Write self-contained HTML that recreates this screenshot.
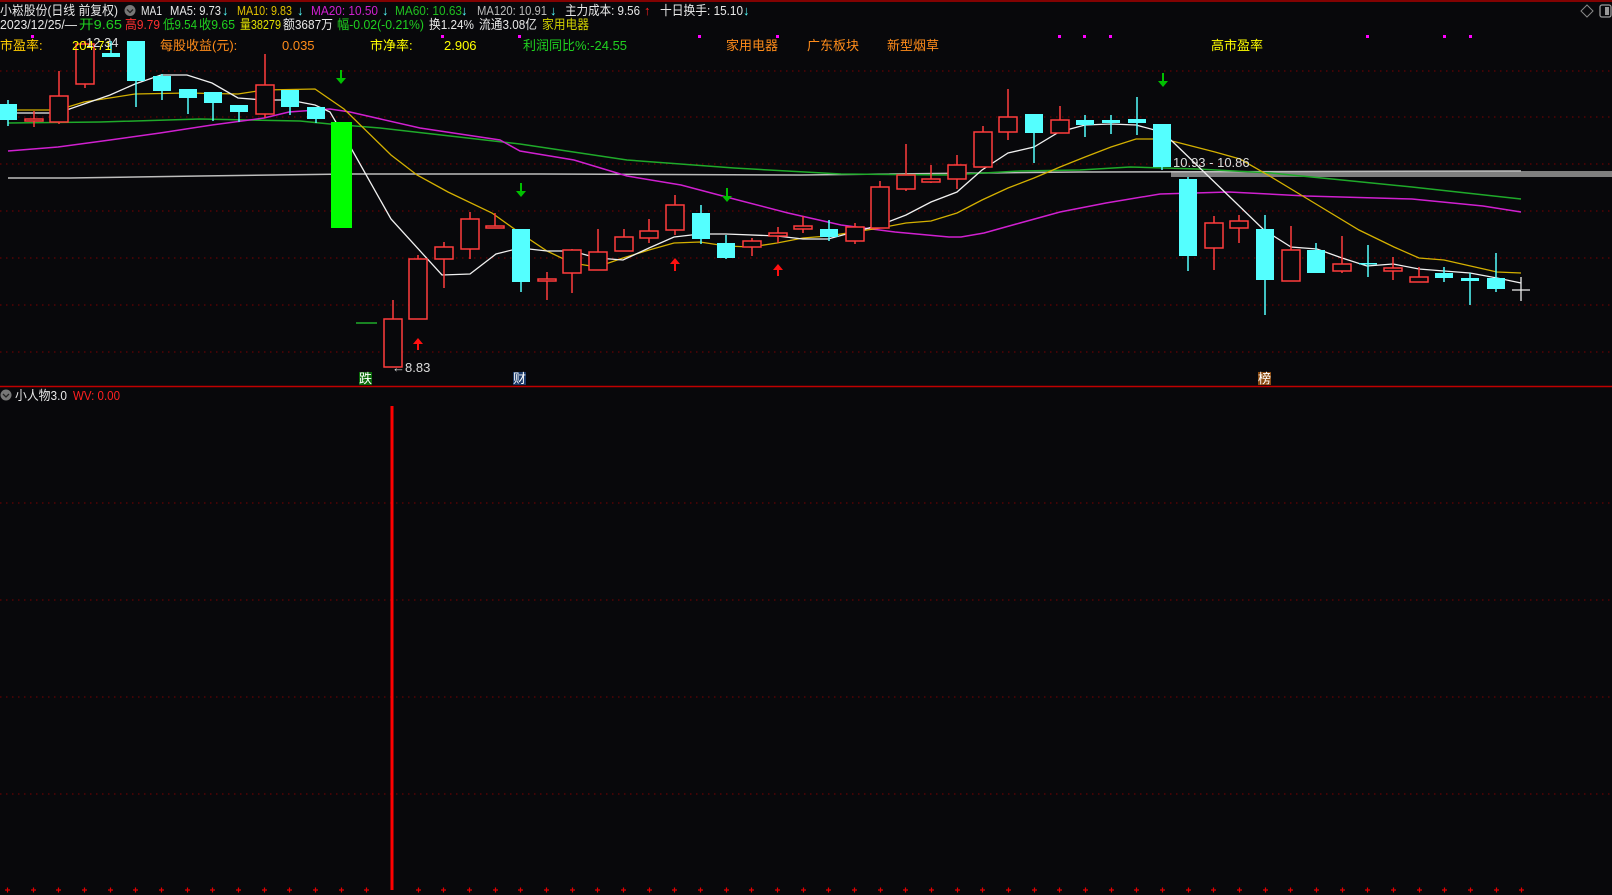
<!DOCTYPE html>
<html><head><meta charset="utf-8"><style>
html,body{margin:0;padding:0;background:#08080b;width:1612px;height:895px;overflow:hidden}
svg{position:absolute;left:0;top:0}
text{font-family:"Liberation Sans","Noto Sans CJK SC",sans-serif;font-size:13px}
.r{fill:#08080b;stroke:#ff3c3c;stroke-width:1.5}
.rw{stroke:#ff3c3c;stroke-width:1.5}
.c{fill:#54ffff}
.cw{stroke:#54ffff;stroke-width:1.5}
.g{stroke:#7a0000;stroke-width:1;stroke-dasharray:1.5 4.5}
</style></head><body>
<svg width="1612" height="895" viewBox="0 0 1612 895">
<line x1="0" y1="1" x2="1612" y2="1" stroke="#a00" stroke-width="1.5"/>
<g class="g">
<line x1="0" y1="71" x2="1612" y2="71"/><line x1="0" y1="117" x2="1612" y2="117"/>
<line x1="0" y1="164" x2="1612" y2="164"/><line x1="0" y1="211" x2="1612" y2="211"/>
<line x1="0" y1="258" x2="1612" y2="258"/><line x1="0" y1="305" x2="1612" y2="305"/>
<line x1="0" y1="352" x2="1612" y2="352"/>
<line x1="0" y1="503" x2="1612" y2="503"/><line x1="0" y1="600" x2="1612" y2="600"/>
<line x1="0" y1="697" x2="1612" y2="697"/><line x1="0" y1="794" x2="1612" y2="794"/>
</g>
<line x1="0" y1="386.5" x2="1612" y2="386.5" stroke="#c00000" stroke-width="1.5"/>

<rect x="1171" y="171" width="441" height="6" fill="#7f7f7f"/>

<polyline fill="none" stroke="#bdbdbd" stroke-width="1.5" points="8,178 70,178 200,176 350,174 540,174 800,175 1080,172 1521,171"/>
<polyline fill="none" stroke="#1faa2a" stroke-width="1.5" points="8,123 100,122 200,119 300,121 330,124 380,128 450,136 520,144 627,160 734,168 841,174 949,175 1020,171 1080,170 1130,167 1197,169 1271,173 1342,180 1412,187 1521,199"/>
<polyline fill="none" stroke="#d020d0" stroke-width="1.5" points="8,151 58,147 110,140 160,133 212,125 264,118 289,112 330,109 350,112 420,128 500,140 520,151 574,160 627,176 681,185 734,199 788,213 841,225 895,232 949,237 961,237 984,233 1020,223 1060,212 1106,203 1160,194 1229,192 1306,196 1412,199 1483,206 1521,212"/>
<polyline fill="none" stroke="#d4b000" stroke-width="1.3" points="8,110 58,110 84,102 135,94 187,93 238,94 264,90 315,89 344,109 391,155 417,175 448,192 492,213 520,233 547,251 572,263 597,267 623,258 649,250 674,243 700,242 726,246 751,247 777,243 803,238 828,236 854,232 880,228 906,223 931,221 957,213 982,200 1008,188 1034,178 1060,167 1085,157 1111,147 1136,139 1162,139 1176,142 1215,152 1240,159 1268,175 1306,198 1359,230 1394,247 1419,258 1444,260 1497,272 1521,273"/>
<polyline fill="none" stroke="#f0f0f0" stroke-width="1.3" points="8,113 58,113 84,104 110,95 135,84 161,75 187,75 212,83 238,98 264,100 289,100 315,105 330,112 351,148 391,219 442,275 470,274 496,254 520,248 547,251 572,251 597,258 623,260 649,248 674,237 700,234 726,234 777,236 803,239 828,239 854,232 880,225 906,215 931,202 957,192 982,170 1008,153 1034,147 1059,132 1085,125 1111,124 1136,125 1162,132 1173,142 1264,230 1291,247 1317,249 1342,258 1367,266 1393,264 1419,269 1444,271 1470,273 1497,278 1521,283"/>

<g>
<line class="cw" x1="8" y1="100" x2="8" y2="126"/><rect class="c" x="-1" y="104" width="18" height="16"/>
<line class="rw" x1="34" y1="111" x2="34" y2="127"/><rect class="r" x="25" y="119" width="18" height="2"/>
<line class="rw" x1="59" y1="71" x2="59" y2="124"/><rect class="r" x="50" y="96" width="18" height="26"/>
<line class="rw" x1="85" y1="41" x2="85" y2="88"/><rect class="r" x="76" y="44" width="18" height="40"/>
<line class="cw" x1="111" y1="41" x2="111" y2="57"/><rect class="c" x="102" y="53" width="18" height="4"/>
<line class="cw" x1="136" y1="41" x2="136" y2="107"/><rect class="c" x="127" y="41" width="18" height="40"/>
<line class="cw" x1="162" y1="74" x2="162" y2="100"/><rect class="c" x="153" y="76" width="18" height="15"/>
<line class="cw" x1="188" y1="89" x2="188" y2="114"/><rect class="c" x="179" y="89" width="18" height="9"/>
<line class="cw" x1="213" y1="92" x2="213" y2="121"/><rect class="c" x="204" y="92" width="18" height="11"/>
<line class="cw" x1="239" y1="105" x2="239" y2="122"/><rect class="c" x="230" y="105" width="18" height="7"/>
<line class="rw" x1="265" y1="54" x2="265" y2="118"/><rect class="r" x="256" y="85" width="18" height="29"/>
<line class="cw" x1="290" y1="90" x2="290" y2="115"/><rect class="c" x="281" y="90" width="18" height="17"/>
<line class="cw" x1="316" y1="107" x2="316" y2="123"/><rect class="c" x="307" y="107" width="18" height="12"/>
<rect x="331" y="122" width="21" height="106" fill="#00ff00"/>
<line x1="356" y1="323" x2="377" y2="323" stroke="#1faa2a" stroke-width="1.5"/>
<line class="rw" x1="393" y1="300" x2="393" y2="367"/><rect class="r" x="384" y="319" width="18" height="48"/>
<line class="rw" x1="418" y1="255" x2="418" y2="319"/><rect class="r" x="409" y="259" width="18" height="60"/>
<line class="rw" x1="444" y1="242" x2="444" y2="288"/><rect class="r" x="435" y="247" width="18" height="12"/>
<line class="rw" x1="470" y1="212" x2="470" y2="259"/><rect class="r" x="461" y="219" width="18" height="30"/>
<line class="rw" x1="495" y1="213" x2="495" y2="228"/><rect class="r" x="486" y="226" width="18" height="2"/>
<line class="cw" x1="521" y1="229" x2="521" y2="292"/><rect class="c" x="512" y="229" width="18" height="53"/>
<line class="rw" x1="547" y1="272" x2="547" y2="300"/><rect class="r" x="538" y="279" width="18" height="2"/>
<line class="rw" x1="572" y1="249" x2="572" y2="293"/><rect class="r" x="563" y="250" width="18" height="23"/>
<line class="rw" x1="598" y1="229" x2="598" y2="270"/><rect class="r" x="589" y="252" width="18" height="18"/>
<line class="rw" x1="624" y1="229" x2="624" y2="251"/><rect class="r" x="615" y="237" width="18" height="14"/>
<line class="rw" x1="649" y1="219" x2="649" y2="243"/><rect class="r" x="640" y="231" width="18" height="7"/>
<line class="rw" x1="675" y1="195" x2="675" y2="235"/><rect class="r" x="666" y="205" width="18" height="25"/>
<line class="cw" x1="701" y1="205" x2="701" y2="244"/><rect class="c" x="692" y="213" width="18" height="26"/>
<line class="cw" x1="726" y1="235" x2="726" y2="259"/><rect class="c" x="717" y="243" width="18" height="15"/>
<line class="rw" x1="752" y1="238" x2="752" y2="256"/><rect class="r" x="743" y="241" width="18" height="6"/>
<line class="rw" x1="778" y1="227" x2="778" y2="243"/><rect class="r" x="769" y="233" width="18" height="3"/>
<line class="rw" x1="803" y1="216" x2="803" y2="233"/><rect class="r" x="794" y="226" width="18" height="3"/>
<line class="cw" x1="829" y1="220" x2="829" y2="241"/><rect class="c" x="820" y="229" width="18" height="8"/>
<line class="rw" x1="855" y1="223" x2="855" y2="244"/><rect class="r" x="846" y="227" width="18" height="14"/>
<line class="rw" x1="880" y1="181" x2="880" y2="228"/><rect class="r" x="871" y="187" width="18" height="41"/>
<line class="rw" x1="906" y1="144" x2="906" y2="191"/><rect class="r" x="897" y="175" width="18" height="14"/>
<line class="rw" x1="931" y1="165" x2="931" y2="183"/><rect class="r" x="922" y="179" width="18" height="3"/>
<line class="rw" x1="957" y1="155" x2="957" y2="189"/><rect class="r" x="948" y="165" width="18" height="14"/>
<line class="rw" x1="983" y1="126" x2="983" y2="167"/><rect class="r" x="974" y="132" width="18" height="35"/>
<line class="rw" x1="1008" y1="89" x2="1008" y2="140"/><rect class="r" x="999" y="117" width="18" height="15"/>
<line class="cw" x1="1034" y1="114" x2="1034" y2="163"/><rect class="c" x="1025" y="114" width="18" height="19"/>
<line class="rw" x1="1060" y1="106" x2="1060" y2="133"/><rect class="r" x="1051" y="120" width="18" height="13"/>
<line class="cw" x1="1085" y1="115" x2="1085" y2="137"/><rect class="c" x="1076" y="120" width="18" height="5"/>
<line class="cw" x1="1111" y1="115" x2="1111" y2="134"/><rect class="c" x="1102" y="120" width="18" height="3"/>
<line class="cw" x1="1137" y1="97" x2="1137" y2="135"/><rect class="c" x="1128" y="119" width="18" height="4"/>
<line class="cw" x1="1162" y1="124" x2="1162" y2="170"/><rect class="c" x="1153" y="124" width="18" height="43"/>
<line class="cw" x1="1188" y1="177" x2="1188" y2="271"/><rect class="c" x="1179" y="179" width="18" height="77"/>
<line class="rw" x1="1214" y1="216" x2="1214" y2="270"/><rect class="r" x="1205" y="223" width="18" height="25"/>
<line class="rw" x1="1239" y1="215" x2="1239" y2="243"/><rect class="r" x="1230" y="221" width="18" height="7"/>
<line class="cw" x1="1265" y1="215" x2="1265" y2="315"/><rect class="c" x="1256" y="229" width="18" height="51"/>
<line class="rw" x1="1291" y1="226" x2="1291" y2="281"/><rect class="r" x="1282" y="250" width="18" height="31"/>
<line class="cw" x1="1316" y1="243" x2="1316" y2="273"/><rect class="c" x="1307" y="250" width="18" height="23"/>
<line class="rw" x1="1342" y1="236" x2="1342" y2="273"/><rect class="r" x="1333" y="264" width="18" height="7"/>
<line class="cw" x1="1368" y1="245" x2="1368" y2="277"/><rect class="c" x="1359" y="263" width="18" height="1.5"/>
<line class="rw" x1="1393" y1="257" x2="1393" y2="280"/><rect class="r" x="1384" y="268" width="18" height="3"/>
<line class="rw" x1="1419" y1="267" x2="1419" y2="282"/><rect class="r" x="1410" y="277" width="18" height="5"/>
<line class="cw" x1="1444" y1="267" x2="1444" y2="282"/><rect class="c" x="1435" y="273" width="18" height="5"/>
<line class="cw" x1="1470" y1="273" x2="1470" y2="305"/><rect class="c" x="1461" y="278" width="18" height="3"/>
<line class="cw" x1="1496" y1="253" x2="1496" y2="292"/><rect class="c" x="1487" y="278" width="18" height="11"/>
<line x1="1521" y1="277" x2="1521" y2="301" stroke="#eee" stroke-width="1.3"/><line x1="1512" y1="290" x2="1530" y2="290" stroke="#eee" stroke-width="1.3"/>
</g>

<g fill="#00c000" stroke="#00c000">
<line x1="341" y1="70" x2="341" y2="80" stroke-width="2"/><polygon points="336,78 346,78 341,84" stroke="none"/>
<line x1="521" y1="183" x2="521" y2="193" stroke-width="2"/><polygon points="516,191 526,191 521,197" stroke="none"/>
<line x1="727" y1="188" x2="727" y2="198" stroke-width="2"/><polygon points="722,196 732,196 727,202" stroke="none"/>
<line x1="1163" y1="73" x2="1163" y2="83" stroke-width="2"/><polygon points="1158,81 1168,81 1163,87" stroke="none"/>
</g>
<g fill="#ff1010" stroke="#ff1010">
<polygon points="413,344 423,344 418,338" stroke="none"/><line x1="418" y1="342" x2="418" y2="350" stroke-width="2"/>
<polygon points="670,264 680,264 675,258" stroke="none"/><line x1="675" y1="262" x2="675" y2="271" stroke-width="2"/>
<polygon points="773,270 783,270 778,264" stroke="none"/><line x1="778" y1="268" x2="778" y2="276" stroke-width="2"/>
</g>

<text x="392" y="372" fill="#ddd" font-size="12">←8.83</text>
<text x="1173" y="167" fill="#ddd" font-size="12">10.93 - 10.86</text>

<rect x="359" y="372" width="13" height="13" fill="#0a6a0a"/><text x="359" y="383" fill="#fff" font-size="12">跌</text>
<rect x="513" y="372" width="13" height="13" fill="#1a3a6a"/><text x="513" y="383" fill="#fff" font-size="12">财</text>
<rect x="1258" y="372" width="13" height="13" fill="#8a4a10"/><text x="1258" y="383" fill="#fff" font-size="12">榜</text>

<g fill="#ff00ff">
<rect x="31" y="35" width="3" height="3"/><rect x="441" y="35" width="3" height="3"/><rect x="518" y="35" width="3" height="3"/>
<rect x="698" y="35" width="3" height="3"/><rect x="776" y="35" width="3" height="3"/>
<rect x="1058" y="35" width="3" height="3"/><rect x="1083" y="35" width="3" height="3"/><rect x="1109" y="35" width="3" height="3"/>
<rect x="1366" y="35" width="3" height="3"/><rect x="1443" y="35" width="3" height="3"/><rect x="1469" y="35" width="3" height="3"/>
</g>

<!-- header row 1 -->
<text x="0" y="15" fill="#e8e8e8" textLength="118" lengthAdjust="spacingAndGlyphs">小崧股份(日线 前复权)</text>
<circle cx="130" cy="10.5" r="5.5" fill="#777"/><path d="M127 9.5 L130 12.5 L133 9.5" stroke="#222" stroke-width="1.3" fill="none"/>
<text x="141" y="15" fill="#e8e8e8" textLength="21" lengthAdjust="spacingAndGlyphs">MA1</text>
<text x="170" y="15" fill="#e8e8e8" textLength="51" lengthAdjust="spacingAndGlyphs">MA5: 9.73</text><text x="222" y="15" fill="#54ffff">↓</text>
<text x="237" y="15" fill="#e0c000" textLength="55" lengthAdjust="spacingAndGlyphs">MA10: 9.83</text><text x="297" y="15" fill="#54ffff">↓</text>
<text x="311" y="15" fill="#d020d0" textLength="67" lengthAdjust="spacingAndGlyphs">MA20: 10.50</text><text x="382" y="15" fill="#54ffff">↓</text>
<text x="395" y="15" fill="#20c020" textLength="67" lengthAdjust="spacingAndGlyphs">MA60: 10.63</text><text x="461" y="15" fill="#54ffff">↓</text>
<text x="477" y="15" fill="#bbb" textLength="70" lengthAdjust="spacingAndGlyphs">MA120: 10.91</text><text x="550" y="15" fill="#54ffff">↓</text>
<text x="565" y="15" fill="#e8e8e8" textLength="75" lengthAdjust="spacingAndGlyphs">主力成本: 9.56</text><text x="644" y="15" fill="#ff2020">↑</text>
<text x="660" y="15" fill="#e8e8e8" textLength="83" lengthAdjust="spacingAndGlyphs">十日换手: 15.10</text><text x="743" y="15" fill="#54ffff">↓</text>
<!-- row 2 -->
<text x="0" y="29" fill="#e8e8e8" textLength="77" lengthAdjust="spacingAndGlyphs">2023/12/25/—</text>
<text x="79" y="29" fill="#20d020" textLength="43" lengthAdjust="spacingAndGlyphs">开9.65</text>
<text x="125" y="29" fill="#ff3030" textLength="35" lengthAdjust="spacingAndGlyphs">高9.79</text>
<text x="163" y="29" fill="#20d020" textLength="34" lengthAdjust="spacingAndGlyphs">低9.54</text>
<text x="199" y="29" fill="#20d020" textLength="36" lengthAdjust="spacingAndGlyphs">收9.65</text>
<text x="240" y="29" fill="#e0e000" textLength="41" lengthAdjust="spacingAndGlyphs">量38279</text>
<text x="283" y="29" fill="#e8e8e8" textLength="50" lengthAdjust="spacingAndGlyphs">额3687万</text>
<text x="337" y="29" fill="#20d020" textLength="87" lengthAdjust="spacingAndGlyphs">幅-0.02(-0.21%)</text>
<text x="429" y="29" fill="#e8e8e8" textLength="45" lengthAdjust="spacingAndGlyphs">换1.24%</text>
<text x="479" y="29" fill="#e8e8e8" textLength="58" lengthAdjust="spacingAndGlyphs">流通3.08亿</text>
<text x="542" y="29" fill="#d0d000" textLength="47" lengthAdjust="spacingAndGlyphs">家用电器</text>
<!-- row 3 -->
<text x="0" y="50" fill="#ffcc00">市盈率:</text>
<text x="72" y="50" fill="#ffff00">204.71</text><text x="86" y="47" fill="#ddd" font-size="12">12.34</text>
<text x="160" y="50" fill="#ff8c1a">每股收益(元):</text>
<text x="282" y="50" fill="#ff8c1a">0.035</text>
<text x="370" y="50" fill="#ffff00">市净率:</text>
<text x="444" y="50" fill="#ffff00">2.906</text>
<text x="523" y="50" fill="#20d020">利润同比%:-24.55</text>
<text x="726" y="50" fill="#ff8c1a">家用电器</text>
<text x="807" y="50" fill="#ff8c1a">广东板块</text>
<text x="887" y="50" fill="#ff8c1a">新型烟草</text>
<text x="1211" y="50" fill="#ffff00">高市盈率</text>

<path d="M1587 5 L1593 11 L1587 17 L1581 11 Z" stroke="#888" fill="none"/>
<rect x="1600" y="5" width="11" height="12" rx="2" stroke="#999" fill="none" stroke-width="1.3"/><rect x="1605" y="7" width="4" height="8" fill="#999"/>

<circle cx="6" cy="395" r="5.5" fill="#777"/><path d="M3 394 L6 397 L9 394" stroke="#222" stroke-width="1.3" fill="none"/>
<text x="15" y="400" fill="#e8e8e8" textLength="52" lengthAdjust="spacingAndGlyphs">小人物3.0</text>
<text x="73" y="400" fill="#ff2020" textLength="47" lengthAdjust="spacingAndGlyphs">WV: 0.00</text>
<rect x="390.5" y="406" width="3" height="484" fill="#ff0000"/>

<g stroke="#e00000" stroke-width="1.2">
<path d="M5 890h5M7.5 887.5v5 M31 890h5M33.5 887.5v5 M56 890h5M58.5 887.5v5 M82 890h5M84.5 887.5v5 M108 890h5M110.5 887.5v5 M133 890h5M135.5 887.5v5 M159 890h5M161.5 887.5v5 M185 890h5M187.5 887.5v5 M210 890h5M212.5 887.5v5 M236 890h5M238.5 887.5v5 M262 890h5M264.5 887.5v5 M287 890h5M289.5 887.5v5 M313 890h5M315.5 887.5v5 M339 890h5M341.5 887.5v5 M364 890h5M366.5 887.5v5 M416 890h5M418.5 887.5v5 M441 890h5M443.5 887.5v5 M467 890h5M469.5 887.5v5 M493 890h5M495.5 887.5v5 M518 890h5M520.5 887.5v5 M544 890h5M546.5 887.5v5 M570 890h5M572.5 887.5v5 M595 890h5M597.5 887.5v5 M621 890h5M623.5 887.5v5 M647 890h5M649.5 887.5v5 M672 890h5M674.5 887.5v5 M698 890h5M700.5 887.5v5 M724 890h5M726.5 887.5v5 M749 890h5M751.5 887.5v5 M775 890h5M777.5 887.5v5 M801 890h5M803.5 887.5v5 M826 890h5M828.5 887.5v5 M852 890h5M854.5 887.5v5 M878 890h5M880.5 887.5v5 M903 890h5M905.5 887.5v5 M929 890h5M931.5 887.5v5 M955 890h5M957.5 887.5v5 M980 890h5M982.5 887.5v5 M1006 890h5M1008.5 887.5v5 M1032 890h5M1034.5 887.5v5 M1057 890h5M1059.5 887.5v5 M1083 890h5M1085.5 887.5v5 M1109 890h5M1111.5 887.5v5 M1134 890h5M1136.5 887.5v5 M1160 890h5M1162.5 887.5v5 M1186 890h5M1188.5 887.5v5 M1211 890h5M1213.5 887.5v5 M1237 890h5M1239.5 887.5v5 M1263 890h5M1265.5 887.5v5 M1288 890h5M1290.5 887.5v5 M1314 890h5M1316.5 887.5v5 M1340 890h5M1342.5 887.5v5 M1365 890h5M1367.5 887.5v5 M1391 890h5M1393.5 887.5v5 M1417 890h5M1419.5 887.5v5 M1442 890h5M1444.5 887.5v5 M1468 890h5M1470.5 887.5v5 M1494 890h5M1496.5 887.5v5 M1519 890h5M1521.5 887.5v5"/>
</g>
</svg>
</body></html>
